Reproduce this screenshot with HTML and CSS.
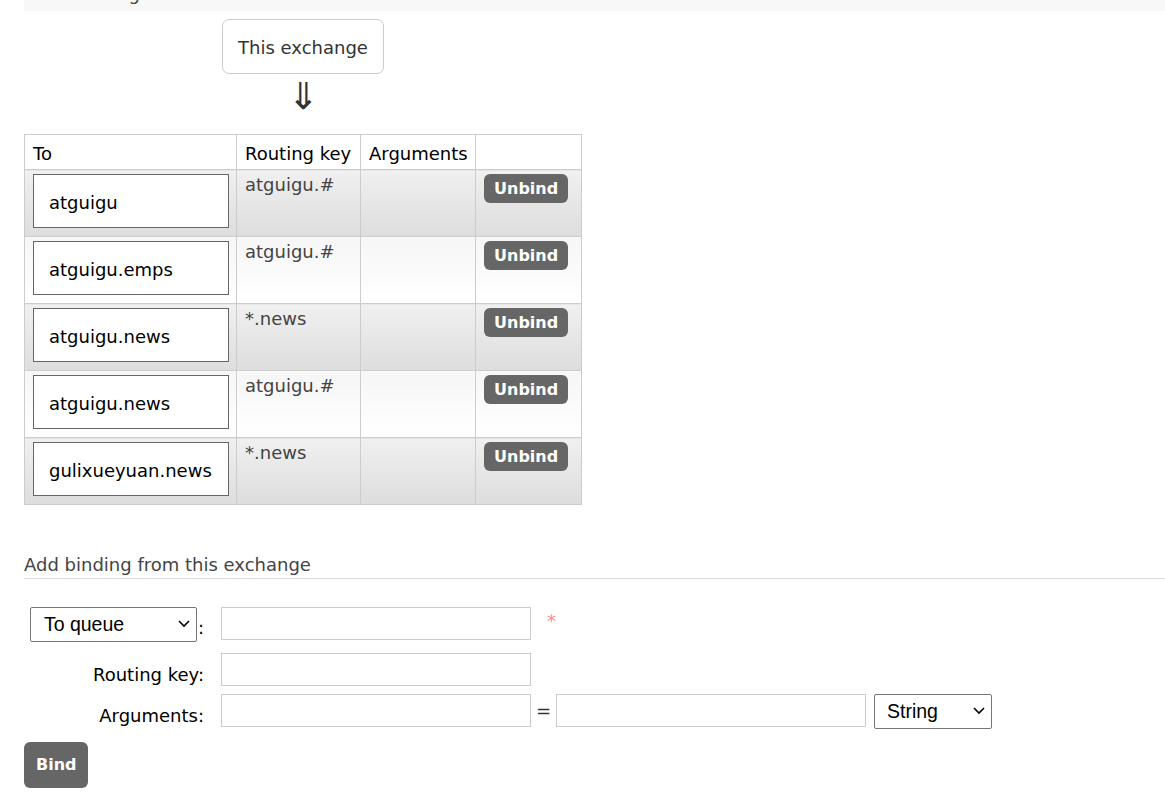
FILE: index.html
```html
<!DOCTYPE html>
<html>
<head>
<meta charset="utf-8">
<link rel="stylesheet" href="styles.css">
</head>
<body>
<div class="page">
  <h2 class="section-title">Bindings</h2>

  <div class="bindings">
    <div class="this-exchange">This exchange</div>
    <div class="arrow">⇓</div>
    <table class="list">
      <colgroup>
        <col class="col-to">
        <col class="col-key">
        <col class="col-args">
        <col class="col-act">
      </colgroup>
      <thead>
        <tr><th>To</th><th>Routing key</th><th>Arguments</th><th></th></tr>
      </thead>
      <tbody>
        <tr class="alt1">
          <td><span class="queue-box">atguigu</span></td>
          <td class="key">atguigu.#</td>
          <td></td>
          <td><button class="btn-small">Unbind</button></td>
        </tr>
        <tr class="alt2">
          <td><span class="queue-box">atguigu.emps</span></td>
          <td class="key">atguigu.#</td>
          <td></td>
          <td><button class="btn-small">Unbind</button></td>
        </tr>
        <tr class="alt1">
          <td><span class="queue-box">atguigu.news</span></td>
          <td class="key">*.news</td>
          <td></td>
          <td><button class="btn-small">Unbind</button></td>
        </tr>
        <tr class="alt2">
          <td><span class="queue-box">atguigu.news</span></td>
          <td class="key">atguigu.#</td>
          <td></td>
          <td><button class="btn-small">Unbind</button></td>
        </tr>
        <tr class="alt1">
          <td><span class="queue-box">gulixueyuan.news</span></td>
          <td class="key">*.news</td>
          <td></td>
          <td><button class="btn-small">Unbind</button></td>
        </tr>
      </tbody>
    </table>
  </div>

  <h3 class="form-title">Add binding from this exchange</h3>

  <form class="binding-form">
    <div class="form-row row-dest">
      <div class="label">
        <span class="select-wrap sel-dest">
          <select class="sel"><option>To queue</option><option>To exchange</option></select>
          <svg class="chev" width="12" height="8" viewBox="0 0 12 8"><polyline points="1,1 6,6 11,1" fill="none" stroke="#000" stroke-width="1.6"/></svg>
        </span><span class="colon">:</span>
      </div>
      <div class="field">
        <input class="txt" type="text">
        <span class="mand">*</span>
      </div>
    </div>
    <div class="form-row row-key">
      <div class="label">Routing key:</div>
      <div class="field"><input class="txt" type="text"></div>
    </div>
    <div class="form-row row-args">
      <div class="label">Arguments:</div>
      <div class="field">
        <input class="txt" type="text">
        <span class="equals">=</span>
        <input class="txt" type="text">
        <span class="select-wrap sel-type">
          <select class="sel"><option>String</option><option>Number</option><option>Boolean</option></select>
          <svg class="chev" width="12" height="8" viewBox="0 0 12 8"><polyline points="1,1 6,6 11,1" fill="none" stroke="#000" stroke-width="1.6"/></svg>
        </span>
      </div>
    </div>
    <button type="button" class="btn-bind">Bind</button>
  </form>
</div>
</body>
</html>
```

FILE: styles.css
```css
html, body {
  margin: 0;
  padding: 0;
  background: #fff;
}

body {
  font-family: "DejaVu Sans", Verdana, sans-serif;
  font-size: 18px;
  line-height: 22px;
  color: #000;
  overflow: hidden;
}

.page {
  padding-left: 24px;
}

.section-title {
  margin: -17px 0 0 0;
  padding: 0 0 6px 48px;
  font-size: 18px;
  font-weight: normal;
  line-height: 22px;
  background: #f8f8f8;
  color: #484848;
}

.bindings {
  display: inline-flex;
  flex-direction: column;
  align-items: center;
  margin-top: 8px;
}

.this-exchange {
  box-sizing: border-box;
  width: 162px;
  height: 55px;
  border: 1px solid #ccc;
  border-radius: 7px;
  text-align: center;
  padding-top: 17px;
  color: #333;
}

.arrow {
  font-size: 37px;
  line-height: 40px;
  margin-top: 3px;
  height: 57px;
  color: #333;
}

table.list {
  border-collapse: collapse;
  table-layout: fixed;
  width: 558px;
  border: 1px solid #ccc;
}

.col-to { width: 212px; }
.col-key { width: 124px; }
.col-args { width: 115px; }
.col-act { width: 106px; }

table.list th {
  text-align: left;
  font-weight: normal;
  padding: 8px 8px 4px 8px;
  border: 1px solid #ccc;
  background: #fff;
  white-space: nowrap;
}

table.list td {
  border: 1px solid #ccc;
  vertical-align: top;
  padding: 4px 8px 8px 8px;
  height: 54px;
}

tr.alt1 td {
  background: linear-gradient(to bottom, #f0f0f0, #dddddd);
}

tr.alt2 td {
  background: linear-gradient(to bottom, #f6f6f6, #ffffff);
}

td.key {
  color: #444;
}

.queue-box {
  display: block;
  box-sizing: border-box;
  width: 196px;
  height: 54px;
  border: 1px solid #666;
  background: #fff;
  padding: 17px 0 0 15px;
  white-space: nowrap;
}

button {
  font-family: "DejaVu Sans", Verdana, sans-serif;
}

.btn-small {
  display: block;
  border: 0;
  background: #666;
  color: #fff;
  font-weight: bold;
  font-size: 16px;
  line-height: 19px;
  padding: 5px 10px;
  border-radius: 6px;
}

.form-title {
  margin: 49px 0 0 0;
  padding: 0 0 2px 0;
  font-size: 18px;
  font-weight: normal;
  line-height: 22px;
  color: #444;
  border-bottom: 1px solid #ddd;
}

.binding-form {
  margin-top: 28px;
}

.form-row {
  display: grid;
  grid-template-columns: 180px auto;
  column-gap: 17px;
  align-items: start;
}

.row-key {
  margin-top: 11px;
}

.row-args {
  margin-top: 8px;
}

.label {
  text-align: right;
  padding-top: 11px;
  line-height: 22px;
  white-space: nowrap;
}

.row-dest .label {
  padding-top: 0;
  display: flex;
  justify-content: flex-end;
  align-items: flex-end;
  height: 35px;
}

.colon {
  line-height: 22px;
  padding-bottom: 3px;
  margin-left: 1px;
}

.field {
  display: flex;
  align-items: flex-start;
}

.txt {
  box-sizing: border-box;
  width: 310px;
  height: 33px;
  border: 1px solid #ccc;
  margin: 0;
  padding: 2px 6px;
  font-size: 18px;
  background: #fff;
}

.mand {
  color: #f88;
  margin: 3px 0 0 16px;
  line-height: 22px;
}

.equals {
  width: 25px;
  text-align: center;
  padding-top: 6px;
  color: #333;
}

.select-wrap {
  position: relative;
  display: inline-block;
}

.sel {
  -webkit-appearance: none;
  appearance: none;
  box-sizing: border-box;
  height: 35px;
  margin: 0;
  border: 1px solid #767676;
  border-radius: 2px;
  background: #fff;
  font-family: "Liberation Sans", Arial, sans-serif;
  font-size: 19.5px;
  color: #000;
  padding: 0 0 2px 13px;
  display: block;
}

.sel-dest .sel {
  width: 167px;
}

.sel-type {
  margin-left: 8px;
}

.sel-type .sel {
  width: 118px;
  padding-left: 12px;
}

.chev {
  position: absolute;
  right: 7px;
  top: 13px;
  pointer-events: none;
}

.btn-bind {
  display: block;
  margin-top: 13px;
  border: 0;
  background: #666;
  color: #fff;
  font-weight: bold;
  font-size: 16px;
  line-height: 22px;
  padding: 12px 12px 12px;
  width: 64px;
  border-radius: 6px;
}
```
